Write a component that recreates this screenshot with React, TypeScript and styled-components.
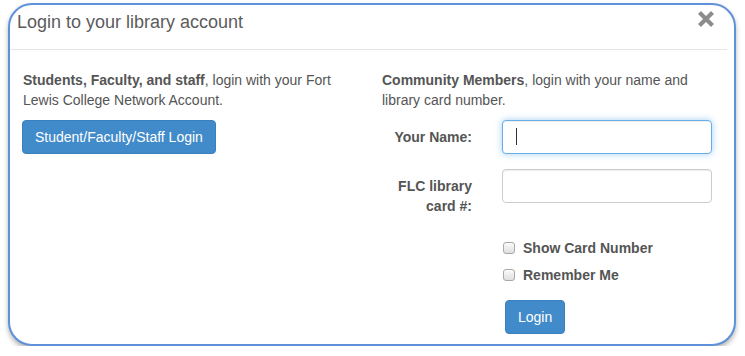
import React from "react";
import styled, { createGlobalStyle } from "styled-components";

const GlobalStyle = createGlobalStyle`
  html, body { margin: 0; padding: 0; background: #ffffff; }
  body {
    font-family: "Liberation Sans", Arial, Helvetica, sans-serif;
    font-size: 14px;
    line-height: 20px;
    color: #555555;
  }
  * { box-sizing: border-box; }
`;

const Dialog = styled.div`
  margin: 3px 0 0 8px;
  width: 728px;
  border: 2px solid #5d91d9;
  border-radius: 24px;
  background: #ffffff;
  box-shadow: 0 3px 5px rgba(0, 0, 0, 0.3);
  overflow: hidden;
`;

const Header = styled.div`
  position: relative;
  height: 45px;
  margin-right: 7px;
  padding: 0 0 0 7px;
  border-bottom: 1px solid #e5e5e5;
  display: flex;
  align-items: center;
`;

const Title = styled.h4`
  margin: 0 0 10px 0;
  font-size: 18px;
  line-height: 20px;
  font-weight: normal;
  color: #5c5c5c;
`;

const CloseButton = styled.button`
  position: absolute;
  top: 5px;
  right: 12px;
  width: 18px;
  height: 18px;
  padding: 0;
  border: 0;
  background: transparent;
  cursor: pointer;
  display: flex;
`;

const Body = styled.div`
  display: grid;
  grid-template-columns: 330px 330px;
  column-gap: 29px;
  padding: 20px 0 10px 12px;
`;

const Column = styled.div`
  display: flex;
  flex-direction: column;
  align-items: flex-start;
`;

const Intro = styled.p`
  margin: 0 0 10px 1px;
`;

const Strong = styled.b`
  font-weight: bold;
`;

const PrimaryButton = styled.button<{ $shift?: number }>`
  height: 34px;
  margin-left: ${(p) => p.$shift ?? 0}px;
  padding: 6px 12px;
  font-family: inherit;
  font-size: 14px;
  line-height: 20px;
  color: #ffffff;
  background: #428bca;
  border: 1px solid #3a80bf;
  border-radius: 4px;
  cursor: pointer;
`;

const FormGrid = styled.div`
  display: grid;
  grid-template-columns: 90px 210px;
  column-gap: 30px;
  width: 330px;
  margin-left: 1px;
`;

const FieldLabel = styled.label`
  padding-top: 7px;
  margin-bottom: 15px;
  font-weight: bold;
  text-align: right;
  color: #555555;
`;

const InputWrap = styled.div`
  position: relative;
  margin-bottom: 15px;
  height: 34px;
`;

const TextInput = styled.input<{ $focused?: boolean }>`
  display: block;
  width: 210px;
  height: 34px;
  padding: 6px 12px;
  font-family: inherit;
  font-size: 14px;
  color: #555555;
  background: #ffffff;
  border: 1px solid ${(p) => (p.$focused ? "#66afe9" : "#cccccc")};
  border-radius: 4px;
  outline: none;
  box-shadow: ${(p) =>
    p.$focused
      ? "inset 0 1px 1px rgba(0,0,0,.075), 0 0 7px rgba(102,175,233,.6)"
      : "inset 0 1px 1px rgba(0,0,0,.075)"};
`;

const Caret = styled.span`
  position: absolute;
  left: 14px;
  top: 8px;
  width: 1px;
  height: 17px;
  background: #333333;
`;

const Offset = styled.div`
  grid-column: 2;
  display: flex;
  flex-direction: column;
  align-items: flex-start;
`;

const CheckRow = styled.label`
  display: flex;
  align-items: center;
  height: 27px;
  padding-top: 7px;
  font-weight: bold;
  color: #555555;
`;

const CheckBox = styled.span`
  width: 12px;
  height: 12px;
  margin: 0 8px 0 1px;
  border: 1px solid #a9a9a9;
  border-radius: 3px;
  background: linear-gradient(#fbfbfb, #dedede);
`;

const ButtonRow = styled.div`
  margin-top: 15px;
`;

export default function App() {
  return (
    <>
      <GlobalStyle />
      <Dialog>
        <Header>
          <Title>Login to your library account</Title>
          <CloseButton aria-label="Close">
            <svg width="18" height="18" viewBox="0 0 18 18">
              <path
                d="M2.5 2.5 L15.5 15.5 M15.5 2.5 L2.5 15.5"
                stroke="#8c8c8c"
                strokeWidth="4.2"
                strokeLinecap="butt"
              />
            </svg>
          </CloseButton>
        </Header>
        <Body>
          <Column>
            <Intro>
              <Strong>Students, Faculty, and staff</Strong>, login with your Fort
              Lewis College Network Account.
            </Intro>
            <PrimaryButton>Student/Faculty/Staff Login</PrimaryButton>
          </Column>
          <Column>
            <Intro>
              <Strong>Community Members</Strong>, login with your name and
              library card number.
            </Intro>
            <FormGrid>
              <FieldLabel htmlFor="name">Your Name:</FieldLabel>
              <InputWrap>
                <TextInput id="name" $focused />
                <Caret />
              </InputWrap>
              <FieldLabel htmlFor="card">
                FLC library
                <br />
                card #:
              </FieldLabel>
              <InputWrap>
                <TextInput id="card" type="password" />
              </InputWrap>
              <Offset>
                <CheckRow>
                  <CheckBox />
                  Show Card Number
                </CheckRow>
                <CheckRow>
                  <CheckBox />
                  Remember Me
                </CheckRow>
                <ButtonRow>
                  <PrimaryButton $shift={3}>Login</PrimaryButton>
                </ButtonRow>
              </Offset>
            </FormGrid>
          </Column>
        </Body>
      </Dialog>
    </>
  );
}
